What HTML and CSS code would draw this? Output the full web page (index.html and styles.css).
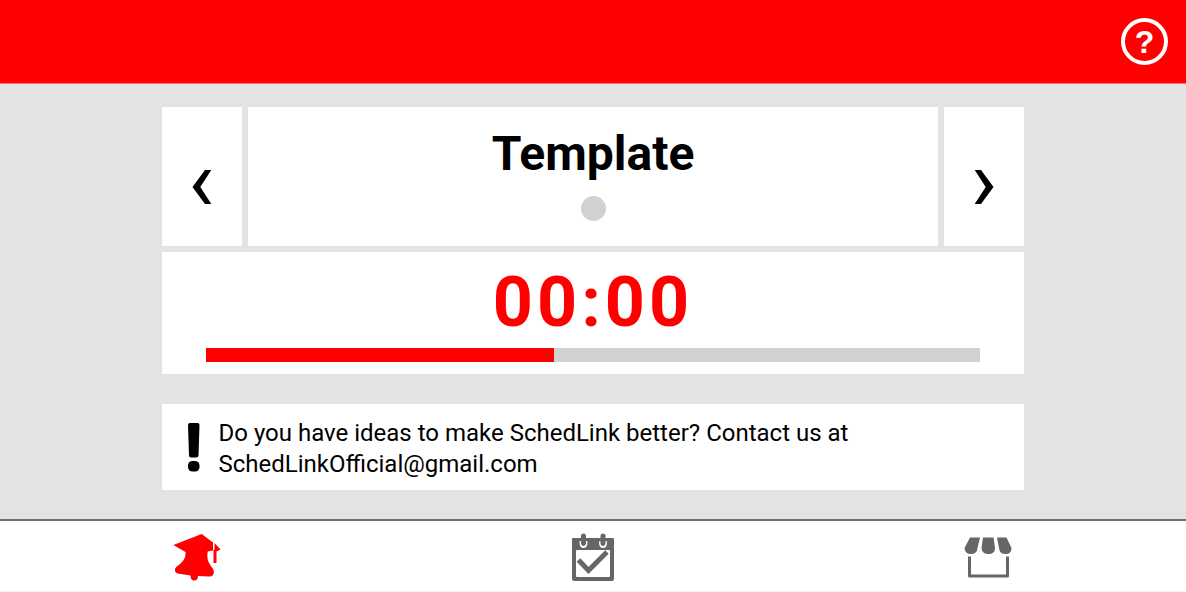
FILE: index.html
```html
<!DOCTYPE html>
<html lang="en">
<head>
<meta charset="utf-8">
<title>SchedLink</title>
<link rel="stylesheet" href="styles.css">
</head>
<body>
<header class="topbar">
  <button class="help" type="button" aria-label="Help">?</button>
</header>
<main class="content">
  <section class="schedule">
    <button class="card arrow" type="button" aria-label="Previous schedule">
      <svg width="20" height="34" viewBox="0 0 20 34"><path d="M13 0H19.300L8.300 17L19.300 34H13L.5 17Z"/></svg>
    </button>
    <div class="card heading">
      <h1 class="title">Template</h1>
      <span class="dot"></span>
    </div>
    <button class="card arrow" type="button" aria-label="Next schedule">
      <svg width="20" height="34" viewBox="0 0 20 34"><path d="M7 0H.7L11.700 17L.7 34H7L19.500 17Z"/></svg>
    </button>
    <div class="card timer">
      <div class="time">00:00</div>
      <div class="track"><div class="fill" style="width:45%"></div></div>
    </div>
  </section>
  <section class="card notice">
    <svg class="alert" width="12" height="50" viewBox="0 0 12 50"><path d="M0 3Q0 1 2 1H9.500Q11.500 1 11.500 3L10.500 33.500Q10.500 35.500 8.500 35.500H3Q1 35.500 1 33.500Z"/><rect y="39" width="11.500" height="10.500" rx="4.500"/></svg>
    <p class="message">Do you have ideas to make SchedLink better? Contact us at SchedLinkOfficial@gmail.com</p>
  </section>
</main>
<nav class="tabs">
  <button class="tab active" type="button" aria-label="Bell schedule">
    <svg width="50" height="48" viewBox="0 0 50 48"><path d="M.3 12L28.700 1L40 9.500V17.500L34.700 18.500C33.500 26 35.500 30 39.500 35Q42 39 40 42Q38.500 44 36 43.500L25 43Q25 47.500 21.200 47.500Q17.500 47.500 17.500 42.500L4.500 40.500Q1.500 39.500 2 36Q2.500 34 5 32.500C10 29 13 25 12.500 19Z"/><path d="M41.500 10L47.500 16.500L43.500 18.500V30H40.500V17L41.500 16.500Z"/></svg>
  </button>
  <button class="tab" type="button" aria-label="Calendar">
    <svg width="44" height="48" viewBox="0 0 44 48"><path fill-rule="evenodd" d="M2 5H42Q43 5 43 6V46Q43 48 41 48H3Q1 48 1 46V6Q1 5 2 5ZM6 17Q5 17 5 18V43Q5 44 6 44H38Q39 44 39 43V18Q39 17 38 17Z"/><path class="ring" d="M9.500 9Q9.500 14 12.500 14T15.500 9M29 9Q29 14 32 14T35 9"/><path class="pin" d="M12.500 3V10M32 3V10"/><path class="check" d="M7.500 27L17.500 37.500L36 19"/></svg>
  </button>
  <button class="tab" type="button" aria-label="Store">
    <svg width="48" height="48" viewBox="0 0 48 48"><path d="M6 4.500H16L13.500 15Q13 21 7 21Q1 21 .5 15ZM19 4.500H29.500L31 15Q31 21 24.500 21T17.500 15ZM33 4.500H42.500L47.500 15Q47.500 21 41.500 21T35 15Z"/><path class="walls" d="M5.500 23.500V43H43.500V23.500"/></svg>
  </button>
</nav>
</body>
</html>
```
FILE: styles.css
```css
* { box-sizing: border-box; }
body {
  margin: 0;
  min-height: 100vh;
  display: flex;
  flex-direction: column;
  background: #e3e3e3;
  color: #000;
  font-family: Roboto, sans-serif;
}
button { border: 0; padding: 0; background: none; color: inherit; cursor: pointer; }
svg { display: block; }
.topbar {
  display: flex;
  justify-content: flex-end;
  padding: 18px;
  background: #f00;
  border-bottom: 1px solid #f17474;
}
.help {
  width: 47px;
  height: 47px;
  border: 4px solid #fff;
  border-radius: 50%;
  color: #fff;
  font: bold 32px/38px "Liberation Sans", sans-serif;
}
.content {
  flex: 1;
  width: 72.6%;
  margin: 0 auto;
  padding: 23px 0 29px;
}
.card { background: #fff; }
.schedule {
  display: grid;
  grid-template-columns: 80px 1fr 80px;
  gap: 6px;
}
.arrow {
  display: flex;
  align-items: center;
  justify-content: center;
  padding-top: 20px;
}
.heading {
  display: flex;
  flex-direction: column;
  align-items: center;
  gap: 14px;
  padding: 19px 0 25px;
}
.title { margin: 0; font-size: 48px; line-height: 56px; }
.dot { width: 25px; height: 25px; border-radius: 50%; background: #d1d1d1; }
.timer { grid-column: 1 / -1; padding: 8px 5% 12px; }
.time {
  padding-bottom: 4px;
  color: #f00;
  font-size: 70px;
  font-weight: bold;
  line-height: 84px;
  letter-spacing: 4px;
  text-align: center;
}
.track { height: 14px; background: #d1d1d1; }
.fill { height: 100%; background: #f00; }
.notice {
  display: flex;
  align-items: flex-start;
  gap: 18px;
  margin-top: 30px;
  padding: 14px 24px 10px 26px;
}
.alert { flex: none; margin-top: 4px; }
.message { margin: 0; font-size: 24px; line-height: 31px; }
.tabs {
  display: grid;
  grid-template-columns: repeat(3, 1fr);
  background: #fff;
  border-top: 2px solid #707070;
  border-bottom: 1px solid #f0f0f0;
}
.tab {
  display: flex;
  justify-content: center;
  padding: 12px 0 10px;
  fill: #666;
  stroke-linecap: round;
}
.active { fill: #f00; }
.ring { fill: none; stroke: #fff; stroke-width: 2; }
.pin { fill: none; stroke: #666; stroke-width: 5; }
.check { fill: none; stroke: #666; stroke-width: 5; stroke-linecap: butt; }
.walls { fill: none; stroke: #666; stroke-width: 3; stroke-linecap: butt; stroke-linejoin: round; }
```
